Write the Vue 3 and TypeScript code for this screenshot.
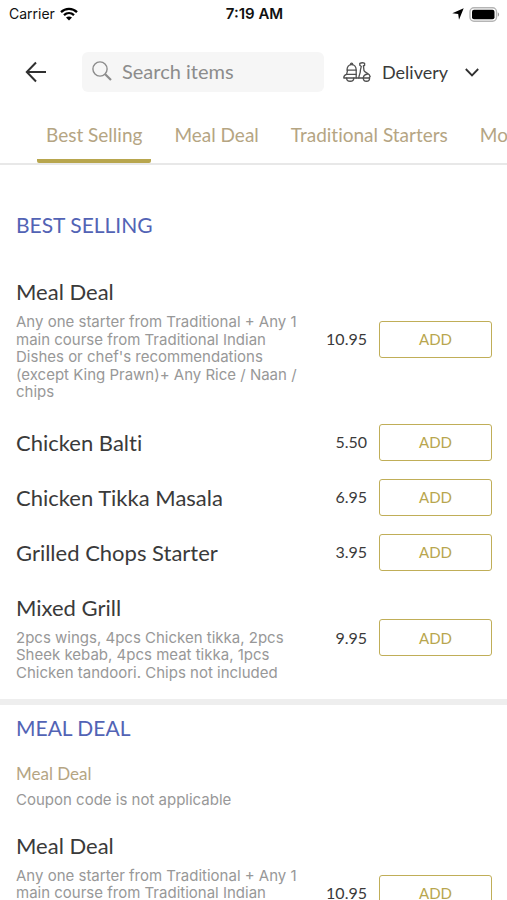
<script setup lang="ts">
import { ref } from 'vue'

interface MenuItem {
  name: string
  price: string
  description?: string
}

interface MenuSection {
  title: string
  note?: { heading: string; text: string }
  items: MenuItem[]
}

const tabs: string[] = ['Best Selling', 'Meal Deal', 'Traditional Starters', 'Mocktails']
const activeTab = ref<string>('Best Selling')
const query = ref<string>('')
const mode = ref<string>('Delivery')

const mealDeal: MenuItem = {
  name: 'Meal Deal',
  price: '10.95',
  description:
    "Any one starter from Traditional + Any 1 main course from Traditional Indian Dishes or chef's recommendations (except King Prawn)+ Any Rice / Naan / chips",
}

const sections: MenuSection[] = [
  {
    title: 'BEST SELLING',
    items: [
      mealDeal,
      { name: 'Chicken Balti', price: '5.50' },
      { name: 'Chicken Tikka Masala', price: '6.95' },
      { name: 'Grilled Chops Starter', price: '3.95' },
      {
        name: 'Mixed Grill',
        price: '9.95',
        description:
          '2pcs wings, 4pcs Chicken tikka, 2pcs Sheek kebab, 4pcs meat tikka, 1pcs Chicken tandoori. Chips not included',
      },
    ],
  },
  {
    title: 'MEAL DEAL',
    note: { heading: 'Meal Deal', text: 'Coupon code is not applicable' },
    items: [mealDeal],
  },
]
</script>

<template>
  <div class="app">
    <div class="status">
      <div class="status-side">
        <span>Carrier</span>
        <svg width="18" height="14" viewBox="0 0 18 14" aria-hidden="true">
          <g fill="none" stroke="#000" stroke-width="2.3">
            <path d="M1 5.1C5.500.8 12.500.8 17 5.100" />
            <path d="M4 8.200C6.900 5.500 11.100 5.500 14 8.200" />
          </g>
          <path d="M9 13.600 6 10.600C7.700 9 10.300 9 12 10.600Z" />
        </svg>
      </div>
      <span class="clock">7:19 AM</span>
      <div class="status-side end">
        <svg width="12" height="12" viewBox="0 0 12 12" aria-hidden="true">
          <path d="M11.700.3 7 11.700 6.200 6 .3 5.200Z" />
        </svg>
        <svg width="31" height="15" viewBox="0 0 31 15" aria-hidden="true">
          <rect x="1" y=".8" width="26.500" height="13.400" rx="4" fill="#fff" stroke="#b5b5b5" stroke-width="1.400" />
          <rect x="3" y="2.800" width="22.500" height="9.400" rx="2" />
          <path d="M28.800 5.300C30.600 6 30.600 9 28.800 9.700Z" fill="#999" />
        </svg>
      </div>
    </div>

    <header class="header">
      <button class="back" type="button" aria-label="Back">
        <svg width="22" height="22" viewBox="0 0 22 22" fill="none" stroke="#303030" stroke-width="2" aria-hidden="true">
          <path d="M21 11H2M11 1.500 1.800 11 11 20.500" />
        </svg>
      </button>
      <label class="search">
        <svg width="20" height="20" viewBox="0 0 20 20" fill="none" stroke="#8c8c8c" aria-hidden="true">
          <circle cx="8" cy="8" r="7.100" stroke-width="1.400" />
          <path d="M13.200 13.200 19 19" stroke-width="2.200" />
        </svg>
        <input v-model="query" type="text" placeholder="Search items" aria-label="Search items" />
      </label>
      <label class="mode">
        <svg width="28" height="20" viewBox="0 0 28 20" fill="none" stroke="#505050" stroke-width="1.300" stroke-linejoin="round" stroke-linecap="round" aria-hidden="true">
          <path d="M4 8.200C4 4.600 5.700 2.600 8.600 2.600S13.200 4.600 13.200 8.200Z" />
          <path d="M7.500 2.500C7.500.7 9.700.7 9.700 2.500" />
          <path d="M4.600 8.200 3.600 12.400H13.200V8.200" />
          <path d="M3.600 12.400C1.600 13 .7 14 .8 16H3.600M10.800 16H20.300" />
          <path d="M3.600 16C3.600 20.300 10.800 20.300 10.800 16Z" />
          <path d="M13.200 12.400V16M15.800 16C15.800 13 17.600 11.600 17.400 8.200L18.300 4.400 16.800 3.200V1.300C18.500.6 20.300.6 21.600 1.300V3.600H20.400L21 8.600C22.200 11 26.600 11 27.200 14.600L26.300 15.400" />
          <path d="M20.300 16C20.300 20.300 26.600 20.300 26.600 16Z" />
          <path d="M20.300 16C20.500 13.600 22 12.400 24.600 12" />
        </svg>
        <select v-model="mode" aria-label="Order type">
          <option>Delivery</option>
        </select>
        <svg width="14" height="9" viewBox="0 0 14 9" fill="none" stroke="#303030" stroke-width="1.800" aria-hidden="true">
          <path d="M.8 1 7 7.400 13.200 1" />
        </svg>
      </label>
    </header>

    <nav class="tabs" aria-label="Menu sections">
      <button
        v-for="tab in tabs"
        :key="tab"
        type="button"
        class="tab"
        :class="{ active: tab === activeTab }"
        @click="activeTab = tab"
      >
        {{ tab }}
      </button>
    </nav>

    <main class="menu">
      <section v-for="section in sections" :key="section.title" class="section">
        <h2>{{ section.title }}</h2>
        <div v-if="section.note" class="note">
          <h3>{{ section.note.heading }}</h3>
          <p class="text">{{ section.note.text }}</p>
        </div>
        <ul>
          <li v-for="item in section.items" :key="item.name" class="item">
            <div class="info">
              <h4>{{ item.name }}</h4>
              <p v-if="item.description" class="text">{{ item.description }}</p>
            </div>
            <span class="price">{{ item.price }}</span>
            <button type="button" class="add" :aria-label="'ADD ' + item.name">ADD</button>
          </li>
        </ul>
      </section>
    </main>
  </div>
</template>

<style>
body {
  margin: 0;
  background: #fff;
}
</style>

<style scoped>
.app {
  display: flex;
  flex-direction: column;
  height: 100vh;
  overflow: hidden;
  background: #fff;
  color: #3a3a3a;
  font-family: Lato, 'Liberation Sans', sans-serif;
  font-variant-ligatures: none;
}
h2,
h3,
h4,
p,
ul {
  margin: 0;
  padding: 0;
  font-weight: 400;
  list-style: none;
}
button,
input,
select {
  margin: 0;
  padding: 0;
  border: 0;
  background: none;
  color: inherit;
  font: inherit;
  font-variant-ligatures: none;
}
svg {
  flex: none;
}
.status {
  display: flex;
  flex: none;
  align-items: center;
  height: 28px;
  padding: 0 7px;
  color: #111;
  font: 14px/20px Inter, sans-serif;
}
.status-side {
  display: flex;
  flex: 1;
  align-items: center;
  gap: 5px;
  padding-left: 2px;
}
.end {
  justify-content: flex-end;
  padding-left: 0;
}
.clock {
  font-size: 15px;
  font-weight: 600;
}
.header {
  display: flex;
  flex: none;
  align-items: center;
  padding: 24px 28px 0 25px;
}
.back {
  display: flex;
  margin-right: 35px;
}
.search {
  display: flex;
  flex: 1;
  align-items: center;
  gap: 10px;
  min-width: 0;
  height: 40px;
  margin-right: 19px;
  padding: 0 10px 2px;
  box-sizing: border-box;
  border-radius: 6px;
  background: #f6f6f6;
}
.search input {
  flex: 1;
  min-width: 0;
  outline: none;
  font-size: 20px;
}
.search input::placeholder {
  color: #8c8c8c;
  opacity: 1;
}
.mode {
  display: flex;
  align-items: center;
  gap: 11px;
}
.mode select {
  width: 72px;
  appearance: none;
  font-size: 18px;
}
.tabs {
  display: flex;
  flex: none;
  gap: 14px;
  height: 71px;
  padding: 0 0 0 37px;
  overflow: hidden;
  border-bottom: 2px solid #e8e8e8;
}
.tab {
  flex: none;
  padding: 30px 9px 12px;
  border-bottom: 4px solid transparent;
  border-radius: 2px;
  box-sizing: border-box;
  color: #b5a583;
  font-size: 19px;
  white-space: nowrap;
}
.tab.active {
  border-bottom-color: #b8a64e;
}
.menu {
  flex: 1;
  min-height: 0;
  overflow-y: auto;
  scrollbar-width: none;
}
.section {
  padding: 46px 15px 4px 16px;
}
.section + .section {
  padding-top: 9px;
  border-top: 6px solid #eee;
}
h2 {
  padding-bottom: 26px;
  color: #5263b5;
  font-size: 21px;
  line-height: 27px;
}
.section + .section h2 {
  padding-bottom: 23px;
}
.note {
  padding-bottom: 9px;
}
h3 {
  padding-bottom: 7px;
  color: #b5a583;
  font-size: 17px;
  line-height: 20px;
}
h4 {
  font-size: 22px;
  line-height: 27px;
}
.text {
  color: #989898;
  font: 15px/1.17 Inter, sans-serif;
}
.item {
  display: flex;
  align-items: center;
}
.info {
  flex: 1;
  padding: 14px 0;
}
.info .text {
  max-width: 290px;
  padding-top: 8px;
}
.price {
  margin-right: 12px;
  font-size: 16px;
  line-height: 20px;
}
.add {
  width: 113px;
  height: 37px;
  border: 1px solid #c0ae58;
  border-radius: 3px;
  color: #b8a64e;
  font-size: 15px;
}
</style>
